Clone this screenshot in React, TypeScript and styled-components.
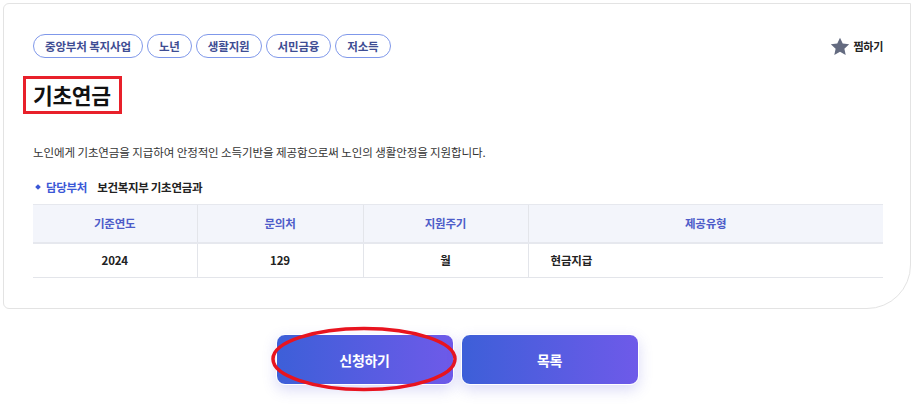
import React from "react";
import styled, { createGlobalStyle } from "styled-components";

const GlobalStyle = createGlobalStyle`
  * { box-sizing: border-box; }
  body {
    margin: 0;
    background: #ffffff;
    font-family: "Noto Sans CJK KR", "Noto Sans", sans-serif;
    color: #222;
  }
`;

const tags = ["중앙부처 복지사업", "노년", "생활지원", "서민금융", "저소득"];

const columns = [
  { head: "기준연도", value: "2024", align: "center" },
  { head: "문의처", value: "129", align: "center" },
  { head: "지원주기", value: "월", align: "center" },
  { head: "제공유형", value: "현금지급", align: "left" },
];

const App = () => {
  return (
    <>
      <GlobalStyle />
      <Page>
        <Card>
          <TopRow>
            <TagList>
              {tags.map((t) => (
                <Tag key={t}>{t}</Tag>
              ))}
            </TagList>
            <Favorite>
              <svg width="20" height="19" viewBox="0 0 24 23">
                <path
                  d="M12 0.8l3.3 7.1 7.8 0.9-5.8 5.3 1.6 7.7L12 17.9l-6.9 3.9 1.6-7.7L0.9 8.8l7.8-0.9z"
                  fill="#646b80"
                />
              </svg>
              찜하기
            </Favorite>
          </TopRow>
          <TitleBox>
            <Title>기초연금</Title>
          </TitleBox>
          <Description>
            노인에게 기초연금을 지급하여 안정적인 소득기반을 제공함으로써 노인의 생활안정을 지원합니다.
          </Description>
          <Dept>
            <Bullet />
            <DeptLabel>담당부처</DeptLabel>
            <DeptValue>보건복지부 기초연금과</DeptValue>
          </Dept>
          <InfoTable>
            <colgroup>
              <col style={{ width: 164 }} />
              <col style={{ width: 166 }} />
              <col style={{ width: 165 }} />
              <col />
            </colgroup>
            <thead>
              <tr>
                {columns.map((c) => (
                  <Th key={c.head}>{c.head}</Th>
                ))}
              </tr>
            </thead>
            <tbody>
              <tr>
                {columns.map((c) => (
                  <Td key={c.head} $align={c.align}>
                    {c.value}
                  </Td>
                ))}
              </tr>
            </tbody>
          </InfoTable>
        </Card>
        <Buttons>
          <ButtonWrap>
            <Button>신청하기</Button>
            <Circle width="196" height="68" viewBox="0 0 196 68">
              <ellipse
                cx="98"
                cy="33"
                rx="91"
                ry="30.5"
                fill="none"
                stroke="#e8141f"
                strokeWidth="3.5"
              />
            </Circle>
          </ButtonWrap>
          <ButtonWrap>
            <Button>목록</Button>
          </ButtonWrap>
        </Buttons>
      </Page>
    </>
  );
};

export default App;

const Page = styled.div`
  width: 912px;
  height: 406px;
  padding: 3px 1px 0 3px;
  overflow: hidden;
`;

const Card = styled.div`
  width: 908px;
  height: 306px;
  border: 1px solid #e3e3e3;
  border-radius: 6px 0 44px 6px;
  padding: 30px 27px 0 29px;
`;

const TopRow = styled.div`
  display: flex;
  justify-content: space-between;
  align-items: center;
`;

const TagList = styled.div`
  display: flex;
  gap: 4px;
`;

const Tag = styled.span`
  height: 24px;
  padding: 0 11px;
  border: 1px solid #7f98ea;
  border-radius: 12px;
  display: flex;
  align-items: center;
  font-size: 11.5px;
  font-weight: 700;
  letter-spacing: -0.15px;
  color: #3e4d93;
`;

const Favorite = styled.div`
  display: flex;
  align-items: center;
  gap: 4px;
  font-size: 11px;
  font-weight: 700;
  color: #222;
  letter-spacing: -0.3px;
`;

const TitleBox = styled.div`
  display: inline-block;
  margin: 18px 0 0 -10px;
  border: 3px solid #e8202a;
  padding: 1px 8px 1px 7px;
`;

const Title = styled.h1`
  margin: 0;
  font-size: 21.5px;
  line-height: 30px;
  font-weight: 700;
  color: #111;
  letter-spacing: -0.4px;
`;

const Description = styled.p`
  margin: 30px 0 0;
  font-size: 11.5px;
  line-height: 16px;
  color: #333;
  letter-spacing: -0.1px;
`;

const Dept = styled.div`
  display: flex;
  align-items: center;
  margin-top: 19px;
  height: 16px;
  font-size: 11.5px;
  letter-spacing: -0.3px;
`;

const Bullet = styled.span`
  width: 4px;
  height: 4px;
  background: #3a57d6;
  transform: rotate(45deg);
  margin: 0 6px 0 3px;
`;

const DeptLabel = styled.span`
  color: #3a57d6;
  font-weight: 700;
  margin-right: 10px;
`;

const DeptValue = styled.span`
  color: #222;
  font-weight: 700;
`;

const InfoTable = styled.table`
  margin-top: 9px;
  width: 850px;
  border-collapse: collapse;
  table-layout: fixed;
  font-size: 11.5px;
  letter-spacing: -0.2px;
`;

const Th = styled.th`
  height: 38px;
  background: #f3f5fb;
  border-top: 1px solid #e6e8ee;
  border-bottom: 2px solid #e6e8ee;
  border-left: 1px solid #e3e5ea;
  color: #4d5cc9;
  font-weight: 700;
  text-align: center;
  &:first-child { border-left: none; }
`;

const Td = styled.td<{ $align: string }>`
  height: 35px;
  border-bottom: 1px solid #e3e5ea;
  border-left: 1px solid #e3e5ea;
  color: #222;
  font-weight: 700;
  text-align: ${(p) => p.$align};
  padding: 0 ${(p) => (p.$align === "left" ? "22px" : "0")};
  &:first-child { border-left: none; }
`;

const Buttons = styled.div`
  display: flex;
  justify-content: center;
  gap: 7px;
  margin-top: 25px;
`;

const ButtonWrap = styled.div`
  position: relative;
`;

const Button = styled.button`
  width: 178px;
  height: 51px;
  border: 1px solid #ffffff;
  border-radius: 9px;
  background: linear-gradient(90deg, #3d5fd8 0%, #6e5ae9 100%);
  box-shadow: 0 5px 14px rgba(90, 90, 220, 0.22);
  color: #fff;
  font-family: "Noto Sans CJK KR", sans-serif;
  font-size: 14px;
  font-weight: 700;
  letter-spacing: -0.3px;
  cursor: pointer;
`;

const Circle = styled.svg`
  position: absolute;
  left: -10px;
  top: -8px;
  pointer-events: none;
`;
